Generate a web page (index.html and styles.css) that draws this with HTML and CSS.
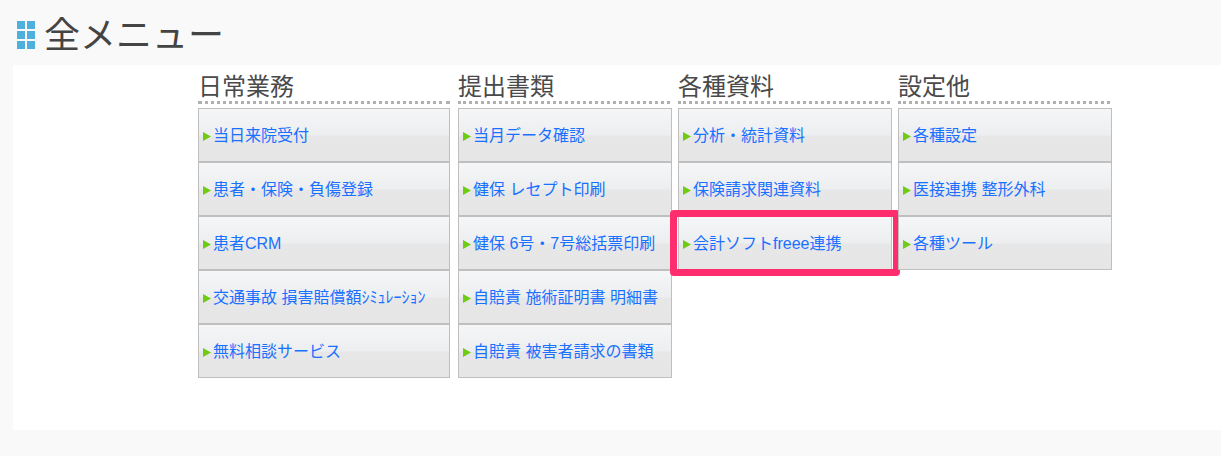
FILE: index.html
```html
<!DOCTYPE html>
<html lang="ja">
<head>
<meta charset="utf-8">
<title>全メニュー</title>
<link rel="stylesheet" href="styles.css">
</head>
<body>
<h1 class="page-title">
  <svg class="grid-icon" width="18" height="28" viewBox="0 0 18 28" aria-hidden="true">
    <g fill="#4fb0de">
      <rect x="0" y="0" width="8" height="8"/><rect x="10" y="0" width="8" height="8"/>
      <rect x="0" y="10" width="8" height="8"/><rect x="10" y="10" width="8" height="8"/>
      <rect x="0" y="20" width="8" height="8"/><rect x="10" y="20" width="8" height="8"/>
    </g>
  </svg>
  <span class="title-text">全メニュー</span>
</h1>
<main class="panel">
  <section class="col col-wide">
    <h2 class="col-title">日常業務</h2>
    <a class="item" href="#">当日来院受付</a>
    <a class="item" href="#">患者・保険・負傷登録</a>
    <a class="item" href="#">患者CRM</a>
    <a class="item" href="#">交通事故 損害賠償額<span class="small">ｼﾐｭﾚｰｼｮﾝ</span></a>
    <a class="item" href="#">無料相談サービス</a>
  </section>
  <section class="col">
    <h2 class="col-title">提出書類</h2>
    <a class="item" href="#">当月データ確認</a>
    <a class="item" href="#">健保 レセプト印刷</a>
    <a class="item" href="#">健保 6号・7号総括票印刷</a>
    <a class="item" href="#">自賠責 施術証明書 明細書</a>
    <a class="item" href="#">自賠責 被害者請求の書類</a>
  </section>
  <section class="col">
    <h2 class="col-title">各種資料</h2>
    <a class="item" href="#">分析・統計資料</a>
    <a class="item" href="#">保険請求関連資料</a>
    <a class="item item-marked" href="#">会計ソフトfreee連携</a>
  </section>
  <section class="col">
    <h2 class="col-title">設定他</h2>
    <a class="item" href="#">各種設定</a>
    <a class="item" href="#">医接連携 整形外科</a>
    <a class="item" href="#">各種ツール</a>
  </section>
</main>
</body>
</html>
```

FILE: styles.css
```css
*, *::before, *::after { box-sizing: border-box; }
html, body { margin: 0; padding: 0; }
body {
  width: 1221px;
  height: 456px;
  overflow: hidden;
  background: #f9f9f9;
  font-family: "Liberation Sans", "Noto Sans CJK JP", sans-serif;
}
.page-title {
  display: flex;
  align-items: center;
  gap: 9px;
  height: 65px;
  margin: 0;
  padding: 5px 0 0 17px;
  font-size: 36px;
  font-weight: 400;
  line-height: 1;
  color: #444;
}
.title-text { margin-top: 2px; }
.grid-icon { flex: none; }
.panel {
  display: flex;
  align-items: flex-start;
  gap: 6px;
  height: 365px;
  margin-left: 13px;
  padding: 5px 0 0 185px;
  background: #fff;
}
.col { display: flex; flex-direction: column; width: 214px; }
.col-wide { width: 252px; margin-right: 2px; }
.col-title {
  height: 34px;
  width: calc(100% - 2px);
  margin: 0 0 4px;
  border-bottom: 3px dotted #b0b0b0;
  font-size: 24px;
  font-weight: 400;
  line-height: 33px;
  color: #4a4a4a;
}
.col-wide .col-title { width: 100%; }
.item {
  position: relative;
  display: flex;
  align-items: center;
  height: 54px;
  padding: 1px 0 0 14px;
  border: 1px solid #bfbfbf;
  background: linear-gradient(to bottom, #f5f6f8 0%, #eceef0 50%, #e7e7e7 52%, #e6e6e6 100%);
  font-size: 16px;
  line-height: 1;
  color: #1a70ff;
  text-decoration: none;
  white-space: nowrap;
}
.item::before {
  content: "";
  position: absolute;
  left: 4px;
  top: 23px;
  width: 8px;
  height: 9px;
  background: #6fcb14;
  clip-path: polygon(0 0, 100% 50%, 0 100%);
}
.item-marked::after {
  content: "";
  position: absolute;
  left: -9px;
  top: -7px;
  width: 230px;
  height: 66px;
  border: 7px solid #ff2d6e;
  border-radius: 4px;
}
```
